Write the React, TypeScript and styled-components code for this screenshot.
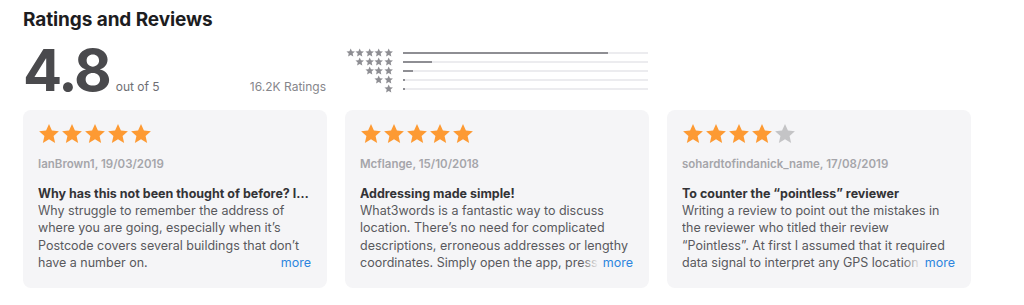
import React from "react";
import styled, { createGlobalStyle } from "styled-components";

const GlobalStyle = createGlobalStyle`
  body {
    margin: 0;
    background: #ffffff;
    font-family: Inter, "Liberation Sans", Arial, sans-serif;
    -webkit-font-smoothing: antialiased;
  }
`;

const Page = styled.section`
  width: 1024px;
  height: 305px;
  box-sizing: border-box;
  padding: 8px 23px 0 23px;
  overflow: hidden;
`;

const Title = styled.h2`
  margin: 0;
  font-size: 19px;
  line-height: 24px;
  font-weight: 700;
  color: #1d1d1f;
  letter-spacing: -0.1px;
`;

const Summary = styled.div`
  display: flex;
  align-items: flex-start;
  margin-top: 12px;
  height: 66px;
`;

const ScoreBlock = styled.div`
  display: flex;
  align-items: baseline;
  width: 303px;
  margin-top: -2px;
`;

const Score = styled.span`
  font-size: 58px;
  line-height: 56px;
  font-weight: 700;
  color: #4a4a4d;
  letter-spacing: -2px;
`;

const OutOf = styled.span`
  margin-left: 6px;
  font-size: 12px;
  color: #6e6e73;
  flex: 1;
`;

const Count = styled.span`
  font-size: 12px;
  color: #86868b;
`;

const Histogram = styled.div`
  margin-left: 20px;
  margin-top: 4px;
  display: grid;
  grid-template-columns: 47px 245px;
  column-gap: 10px;
`;

const StarCell = styled.div`
  display: flex;
  justify-content: flex-end;
  align-items: center;
  height: 9px;
`;

const Track = styled.div`
  height: 2px;
  margin-top: 4px;
  background: #ececef;
`;

const Fill = styled.div`
  height: 2px;
  background: #8e8e93;
`;

const Cards = styled.div`
  display: grid;
  grid-template-columns: repeat(3, 304px);
  column-gap: 18px;
`;

const Card = styled.article`
  background: #f5f5f7;
  border-radius: 8px;
  height: 178px;
  box-sizing: border-box;
  padding: 13px 16px 0 15px;
  display: flex;
  flex-direction: column;
`;

const Stars = styled.div`
  display: flex;
  gap: 1px;
  height: 22px;
`;

const Author = styled.div`
  margin-top: 12px;
  font-size: 11.5px;
  line-height: 14px;
  font-weight: 600;
  color: #a5a5aa;
`;

const ReviewTitle = styled.div`
  margin-top: 14px;
  font-size: 12.5px;
  line-height: 17px;
  font-weight: 700;
  color: #333336;
  white-space: nowrap;
  overflow: hidden;
  text-overflow: ellipsis;
`;

const BodyWrap = styled.div`
  position: relative;
  font-size: 12.5px;
  line-height: 17.3px;
  color: #59595d;
  height: 70px;
  overflow: hidden;
`;

const More = styled.span`
  position: absolute;
  right: 0;
  top: 52px;
  padding-left: 22px;
  line-height: 17px;
  color: #2e86de;
  background: linear-gradient(to right, rgba(245, 245, 247, 0), #f5f5f7 18px);
`;

type StarProps = { size: number; color: string };

const Star = ({ size, color }: StarProps) => (
  <svg width={size} height={size} viewBox="0 0 24 24">
    <path
      d="M12 1.2l3.2 7.1 7.6.7-5.8 5.1 1.7 7.6L12 17.7l-6.7 4 1.7-7.6L1.2 9l7.6-.7z"
      fill={color}
    />
  </svg>
);

const histogram = [
  { stars: 5, pct: 83.5 },
  { stars: 4, pct: 12 },
  { stars: 3, pct: 4.2 },
  { stars: 2, pct: 1 },
  { stars: 1, pct: 1 },
];

const reviews = [
  {
    rating: 5,
    author: "IanBrown1, 19/03/2019",
    title: "Why has this not been thought of before? I really love this app",
    body: "Why struggle to remember the address of where you are going, especially when it\u2019s Postcode covers several buildings that don\u2019t have a number on.",
  },
  {
    rating: 5,
    author: "Mcflange, 15/10/2018",
    title: "Addressing made simple!",
    body: "What3words is a fantastic way to discuss location. There\u2019s no need for complicated descriptions, erroneous addresses or lengthy coordinates. Simply open the app, press the button and share your three words.",
  },
  {
    rating: 4,
    author: "sohardtofindanick_name, 17/08/2019",
    title: "To counter the \u201cpointless\u201d reviewer",
    body: "Writing a review to point out the mistakes in the reviewer who titled their review \u201cPointless\u201d. At first I assumed that it required data signal to interpret any GPS location and then I realised it works offline.",
  },
];

export default function App() {
  return (
    <>
      <GlobalStyle />
      <Page>
        <Title>Ratings and Reviews</Title>
        <Summary>
          <ScoreBlock>
            <Score>4.8</Score>
            <OutOf>out of 5</OutOf>
            <Count>16.2K Ratings</Count>
          </ScoreBlock>
          <Histogram>
            {histogram.map((row) => (
              <React.Fragment key={row.stars}>
                <StarCell>
                  {Array.from({ length: row.stars }).map((_, i) => (
                    <Star key={i} size={9.4} color="#8e8e93" />
                  ))}
                </StarCell>
                <Track>
                  <Fill style={{ width: `${row.pct}%` }} />
                </Track>
              </React.Fragment>
            ))}
          </Histogram>
        </Summary>
        <Cards>
          {reviews.map((r) => (
            <Card key={r.author}>
              <Stars>
                {Array.from({ length: 5 }).map((_, i) => (
                  <Star key={i} size={22} color={i < r.rating ? "#fd9a33" : "#c4c4c6"} />
                ))}
              </Stars>
              <Author>{r.author}</Author>
              <ReviewTitle>{r.title}</ReviewTitle>
              <BodyWrap>
                {r.body}
                <More>more</More>
              </BodyWrap>
            </Card>
          ))}
        </Cards>
      </Page>
    </>
  );
}
